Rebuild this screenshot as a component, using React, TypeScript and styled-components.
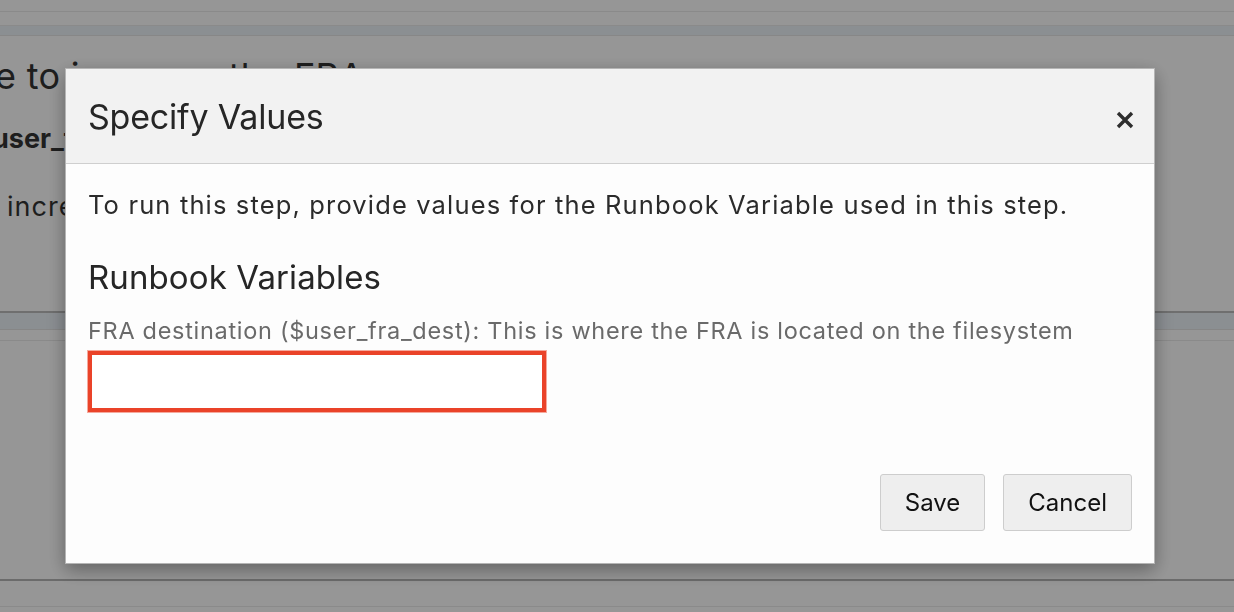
import React from "react";
import styled, { createGlobalStyle } from "styled-components";

const GlobalStyle = createGlobalStyle`
  html, body {
    margin: 0;
    padding: 0;
    background: #fbfbfb;
    font-family: Inter, "Noto Sans", "Liberation Sans", sans-serif;
    overflow: hidden;
  }
  * { box-sizing: border-box; }
`;

/* ---------- background page ---------- */
const Page = styled.div`
  width: 1234px;
  height: 612px;
  display: flex;
  flex-direction: column;
  background: #fbfbfb;
  overflow: hidden;
`;

const Strip = styled.div<{ $h: number; $bg?: string; $line?: string }>`
  height: ${(p) => p.$h}px;
  flex: none;
  background: ${(p) => p.$bg || "#fbfbfb"};
  border-bottom: 1px solid ${(p) => p.$line || "#e6e6e6"};
`;

const Card = styled.div`
  height: 277px;
  flex: none;
  padding: 18px 0 0 0;
  color: #333;
  border-bottom: 2px solid #b9b9b9;
`;

const CardTitle = styled.div`
  font-size: 36px;
  line-height: 44px;
  margin-left: -5px;
  letter-spacing: 0.3px;
  white-space: nowrap;
`;

const CardCode = styled.div`
  font-size: 27px;
  font-weight: 700;
  line-height: 34px;
  margin-top: 24px;
  margin-left: -8px;
  white-space: nowrap;
`;

const CardText = styled.div`
  font-size: 27px;
  line-height: 34px;
  margin-top: 34px;
  margin-left: 7px;
  letter-spacing: 1px;
  white-space: nowrap;
`;

const Panel = styled.div`
  height: 240px;
  flex: none;
  border-bottom: 2px solid #b3b3b3;
`;

/* ---------- modal ---------- */
const Backdrop = styled.div`
  position: fixed;
  inset: 0;
  background: rgba(0, 0, 0, 0.4);
  padding: 68px 0 0 65px;
`;

const Dialog = styled.div`
  width: 1090px;
  background: #fdfdfd;
  border: 1px solid #b5b5b5;
  box-shadow: 0 6px 18px rgba(0, 0, 0, 0.35);
  color: #2b2b2b;
`;

const Header = styled.div`
  height: 95px;
  display: flex;
  align-items: center;
  justify-content: space-between;
  padding: 0 20px 0 22px;
  background: #f2f2f2;
  border-bottom: 1px solid #cfcfcf;
`;

const Title = styled.h1`
  margin: 0;
  font-size: 34px;
  font-weight: 400;
  color: #262626;
  letter-spacing: -0.2px;
`;

const CloseButton = styled.button`
  border: 0;
  background: transparent;
  padding: 0;
  margin-top: 8px;
  width: 18px;
  height: 18px;
  display: flex;
  cursor: pointer;
`;

const Body = styled.div`
  padding: 26px 22px 32px 22px;
`;

const Intro = styled.p`
  margin: 0;
  font-size: 25.5px;
  line-height: 30px;
  letter-spacing: 1.15px;
  color: #2b2b2b;
`;

const SectionTitle = styled.h2`
  margin: 37px 0 0 0;
  font-size: 33px;
  font-weight: 400;
  line-height: 40px;
  letter-spacing: 0.1px;
  color: #262626;
`;

const FieldLabel = styled.label`
  display: block;
  margin-top: 20px;
  font-size: 23.5px;
  line-height: 28px;
  letter-spacing: 0.7px;
  color: #6a6a6a;
`;

const TextInput = styled.input`
  display: block;
  margin-top: 6px;
  width: 458px;
  height: 61px;
  border: 4px solid #ea4329;
  box-shadow: 0 0 0 1px rgba(234, 67, 41, 0.45);
  background: #fff;
  outline: none;
  font-size: 22px;
  padding: 0 10px;
`;

const Footer = styled.div`
  margin-top: 62px;
  display: flex;
  justify-content: flex-end;
  gap: 18px;
`;

const Button = styled.button`
  height: 57px;
  padding: 0 24px;
  background: #eeeeee;
  border: 1px solid #cdcdcd;
  border-radius: 3px;
  font-family: inherit;
  font-size: 24px;
  color: #111;
  cursor: pointer;
`;

export default function App() {
  return (
    <>
      <GlobalStyle />
      <Page>
        <Strip $h={12} />
        <Strip $h={14} />
        <Strip $h={10} $bg="#e8eef4" $line="#e2e2e2" />
        <Card>
          <CardTitle>e to increase the FRA</CardTitle>
          <CardCode>user_fra_dest</CardCode>
          <CardText>increase the FRA size</CardText>
        </Card>
        <Strip $h={17} $bg="#e8eef4" $line="#e0e0e0" />
        <Strip $h={11} />
        <Panel />
        <Strip $h={26} />
      </Page>
      <Backdrop>
        <Dialog role="dialog" aria-labelledby="dlg-title">
          <Header>
            <Title id="dlg-title">Specify Values</Title>
            <CloseButton aria-label="Close">
              <svg width="18" height="18" viewBox="0 0 18 18">
                <path d="M2 2 L16 16 M16 2 L2 16" stroke="#2e2e2e" strokeWidth="3.4" strokeLinecap="butt" />
              </svg>
            </CloseButton>
          </Header>
          <Body>
            <Intro>To run this step, provide values for the Runbook Variable used in this step.</Intro>
            <SectionTitle>Runbook Variables</SectionTitle>
            <FieldLabel htmlFor="fra">
              FRA destination ($user_fra_dest): This is where the FRA is located on the filesystem
            </FieldLabel>
            <TextInput id="fra" />
            <Footer>
              <Button>Save</Button>
              <Button>Cancel</Button>
            </Footer>
          </Body>
        </Dialog>
      </Backdrop>
    </>
  );
}
